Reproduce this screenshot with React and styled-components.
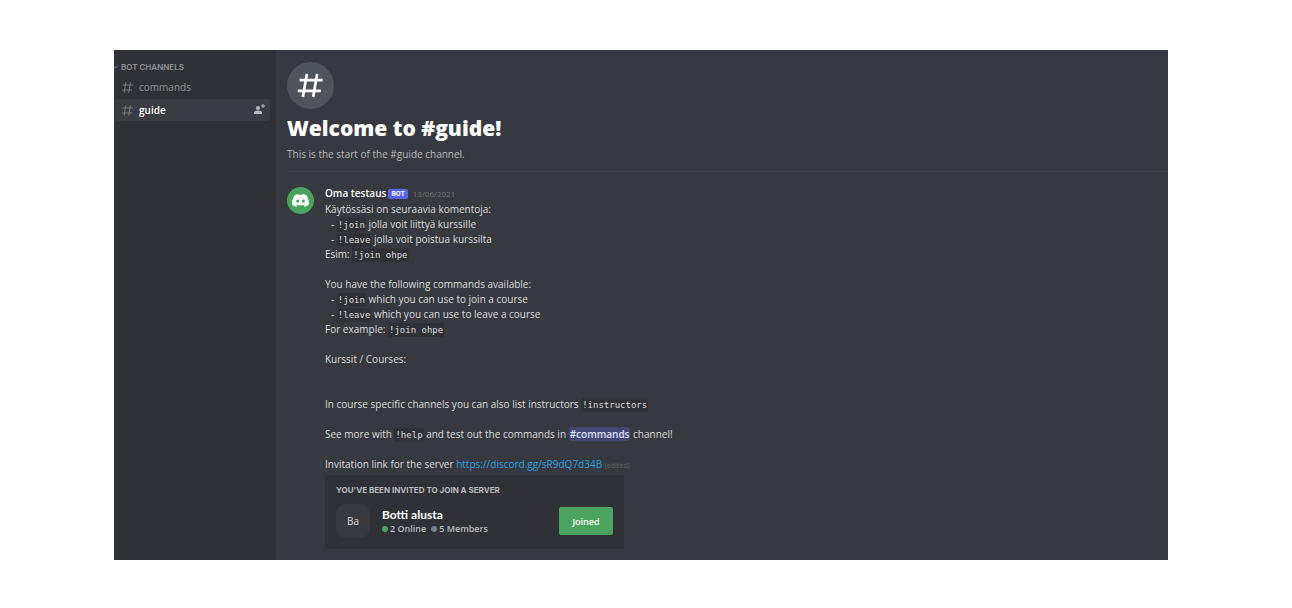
import React from "react";
import styled, { createGlobalStyle } from "styled-components";

const Global = createGlobalStyle`
  * { box-sizing: border-box; }
  body {
    margin: 0;
    background: #ffffff;
    font-family: "Open Sans", "Noto Sans", sans-serif;
    font-size: 10px;
    line-height: 15px;
    color: #dcddde;
  }
  h1, h2, h3, p, ul { margin: 0; padding: 0; }
  a { text-decoration: none; }
`;

const Page = styled.div`
  padding: 50px 124px 48px 114px;
`;

const Window = styled.div`
  display: flex;
  background: #36393f;
`;

const Sidebar = styled.nav`
  flex: 0 0 162px;
  background: #2f3136;
  padding: 10px 6px 0 0;
`;

const Category = styled.h2`
  display: flex;
  align-items: center;
  gap: 3px;
  height: 14px;
  font: 600 8px/14px Inter, sans-serif;
  color: #8e9297;
`;

const ChannelList = styled.ul`
  list-style: none;
  display: flex;
  flex-direction: column;
  gap: 1px;
  padding: 2px 0 0 1px;
`;

const Channel = styled.a`
  display: flex;
  align-items: center;
  gap: 5px;
  height: 22px;
  padding: 0 5px 0 6px;
  border-radius: 3px;
  font-weight: ${(p) => (p.$active ? 600 : 400)};
  color: ${(p) => (p.$active ? "#ffffff" : "#8e9297")};
  background: ${(p) => (p.$active ? "#393c43" : "transparent")};
`;

const ChannelName = styled.span`
  flex: 1;
`;

const Content = styled.main`
  flex: 1;
  min-width: 0;
  padding: 12px 0 11px 11px;
`;

const ChannelBadge = styled.div`
  display: grid;
  place-items: center;
  width: 47px;
  height: 47px;
  border-radius: 50%;
  background: #4f545c;
`;

const Title = styled.h1`
  margin-top: 4px;
  font: 800 21px/30px "Open Sans", sans-serif;
  color: #ffffff;
`;

const Subtitle = styled.p`
  margin-top: 4px;
  padding-bottom: 9px;
  border-bottom: 1px solid #3e4147;
  color: #b9bbbe;
`;

const Message = styled.article`
  display: flex;
  gap: 11px;
  padding-top: 15px;
`;

const Avatar = styled.div`
  flex: none;
  display: grid;
  place-items: center;
  width: 27px;
  height: 27px;
  border-radius: 50%;
  background: #4aa35f;
`;

const MessageBody = styled.div`
  flex: 1;
  min-width: 0;
`;

const MessageHeader = styled.header`
  display: flex;
  align-items: center;
  gap: 2px;
  height: 13px;
  margin-bottom: 2px;
`;

const Author = styled.h3`
  font-size: 10px;
  line-height: 13px;
  font-weight: 600;
  color: #ffffff;
`;

const BotTag = styled.span`
  padding: 0 3px;
  border-radius: 2px;
  background: #5865f2;
  color: #ffffff;
  font: 600 7px/10px Roboto, sans-serif;
`;

const Time = styled.time`
  padding-left: 3px;
  font-size: 8px;
  color: #72767d;
`;

const Line = styled.p`
  min-height: 15px;
  padding-left: ${(p) => (p.$indent ? 6 : 0)}px;
`;

const Code = styled.code`
  padding: 2px 1px;
  border-radius: 2px;
  background: #2f3136;
  font: 9px/10px "DejaVu Sans Mono", monospace;
`;

const Mention = styled.a`
  padding: 0 1px;
  border-radius: 2px;
  background: #414675;
  color: #dee0fc;
  font-weight: 600;
`;

const Link = styled.a`
  color: #2c9fe0;
`;

const Edited = styled.span`
  font-size: 7px;
  line-height: 10px;
  color: #5d6168;
`;

const Invite = styled.section`
  width: 299px;
  max-width: 100%;
  margin-top: 3px;
  padding: 9px 11px 11px;
  border-radius: 3px;
  background: #2f3136;
`;

const InviteTitle = styled.h3`
  font: 700 8px/12px Inter, sans-serif;
  color: #b9bbbe;
`;

const InviteRow = styled.div`
  display: flex;
  align-items: center;
  margin-top: 8px;
`;

const ServerIcon = styled.div`
  display: grid;
  place-items: center;
  width: 34px;
  height: 34px;
  margin-right: 12px;
  border-radius: 10px;
  background: #36393f;
`;

const ServerInfo = styled.div`
  flex: 1;
`;

const ServerName = styled.h3`
  font: 700 12px/15px Lato, sans-serif;
  color: #ffffff;
`;

const Counts = styled.div`
  display: flex;
  gap: 5px;
  font-size: 9px;
  line-height: 13px;
  font-weight: 600;
  color: #b9bbbe;
`;

const Count = styled.span`
  display: flex;
  align-items: center;
  gap: 2px;
  &::before {
    content: "";
    width: 6px;
    height: 6px;
    border-radius: 50%;
    background: ${(p) => p.$dot};
  }
`;

const Joined = styled.button`
  width: 54px;
  height: 28px;
  padding: 0;
  border: 0;
  border-radius: 2px;
  background: #4aa35f;
  color: #ffffff;
  font: 600 9px/15px "Open Sans", sans-serif;
`;

const Hash = ({ size, color, weight }) => (
  <svg width={size} height={size} viewBox="0 0 24 24" fill="none" stroke={color} strokeWidth={weight} aria-hidden="true">
    <path d="M9 2.500 5.700 21.500M17.500 2.500 14.200 21.500M3 7.500H22M1.500 16.500H20.500" />
  </svg>
);

const Chevron = () => (
  <svg width="4" height="5" viewBox="0 0 4 5" fill="none" stroke="#8e9297" aria-hidden="true">
    <path d="M0 3 L1 3 L3.500 1" />
  </svg>
);

const AddPerson = () => (
  <svg width="12" height="12" viewBox="0 0 24 24" fill="#b9bbbe" aria-hidden="true">
    <path d="M21 3V0h-2v3h-3v2h3v3h2V5h3V3h-3Z" />
    <circle cx="10" cy="8" r="4" />
    <path d="M2 20v-2c0-3.500 4-5 8-5s8 1.500 8 5v2H2Z" />
  </svg>
);

const Logo = () => (
  <svg width="17" height="13" viewBox="0 0 71 55" fill="#ffffff" aria-hidden="true">
    <path d="M60.100 4.900A58.500 58.500 0 0 0 45.650.400c-.6 1.100-1.350 2.600-1.850 3.800a54 54 0 0 0-16.200 0c-.5-1.200-1.300-2.700-1.900-3.800A58.400 58.400 0 0 0 11.200 4.900C1.600 18.700-1 32.100.300 45.400a58.900 58.900 0 0 0 17.800 9c1.400-1.900 2.700-4 3.700-6.100-2-.7-3.900-1.600-5.600-2.700l1.400-1.100a42 42 0 0 0 35.900 0l1.400 1.100c-1.800 1-3.700 2-5.700 2.700 1.100 2.100 2.300 4.200 3.700 6.100a58.700 58.700 0 0 0 17.800-9c1.500-15.400-2.500-28.700-10.600-40.500ZM23.700 37.300c-3.500 0-6.400-3.200-6.400-7.200s2.800-7.200 6.400-7.200 6.500 3.300 6.400 7.200c0 4-2.800 7.200-6.400 7.200Zm23.700 0c-3.500 0-6.400-3.200-6.400-7.200s2.800-7.200 6.400-7.200 6.500 3.300 6.400 7.200c0 4-2.800 7.200-6.400 7.200Z" />
  </svg>
);

export default function App() {
  return (
    <>
      <Global />
      <Page>
        <Window>
          <Sidebar>
            <Category><Chevron />BOT CHANNELS</Category>
            <ChannelList>
              <li>
                <Channel href="#commands">
                  <Hash size={13} color="#72767d" weight={2} />
                  <ChannelName>commands</ChannelName>
                </Channel>
              </li>
              <li>
                <Channel href="#guide" $active>
                  <Hash size={13} color="#72767d" weight={2} />
                  <ChannelName>guide</ChannelName>
                  <AddPerson />
                </Channel>
              </li>
            </ChannelList>
          </Sidebar>
          <Content>
            <ChannelBadge><Hash size={29} color="#ffffff" weight={2.2} /></ChannelBadge>
            <Title>Welcome to #guide!</Title>
            <Subtitle>This is the start of the #guide channel.</Subtitle>
            <Message>
              <Avatar><Logo /></Avatar>
              <MessageBody>
                <MessageHeader>
                  <Author>Oma testaus</Author>
                  <BotTag>BOT</BotTag>
                  <Time dateTime="2021-06-13">13/06/2021</Time>
                </MessageHeader>
                <Line>Käytössäsi on seuraavia komentoja:</Line>
                <Line $indent>- <Code>!join</Code> jolla voit liittyä kurssille</Line>
                <Line $indent>- <Code>!leave</Code> jolla voit poistua kurssilta</Line>
                <Line>Esim: <Code>!join ohpe</Code></Line>
                <Line />
                <Line>You have the following commands available:</Line>
                <Line $indent>- <Code>!join</Code> which you can use to join a course</Line>
                <Line $indent>- <Code>!leave</Code> which you can use to leave a course</Line>
                <Line>For example: <Code>!join ohpe</Code></Line>
                <Line />
                <Line>Kurssit / Courses:</Line>
                <Line />
                <Line />
                <Line>In course specific channels you can also list instructors <Code>!instructors</Code></Line>
                <Line />
                <Line>See more with <Code>!help</Code> and test out the commands in <Mention href="#commands">#commands</Mention> channel!</Line>
                <Line />
                <Line>
                  Invitation link for the server <Link href="https://discord.gg/sR9dQ7d34B">https://discord.gg/sR9dQ7d34B</Link> <Edited>(edited)</Edited>
                </Line>
                <Invite>
                  <InviteTitle>YOU'VE BEEN INVITED TO JOIN A SERVER</InviteTitle>
                  <InviteRow>
                    <ServerIcon>Ba</ServerIcon>
                    <ServerInfo>
                      <ServerName>Botti alusta</ServerName>
                      <Counts>
                        <Count $dot="#4aa35f">2 Online</Count>
                        <Count $dot="#747f8d">5 Members</Count>
                      </Counts>
                    </ServerInfo>
                    <Joined type="button">Joined</Joined>
                  </InviteRow>
                </Invite>
              </MessageBody>
            </Message>
          </Content>
        </Window>
      </Page>
    </>
  );
}
